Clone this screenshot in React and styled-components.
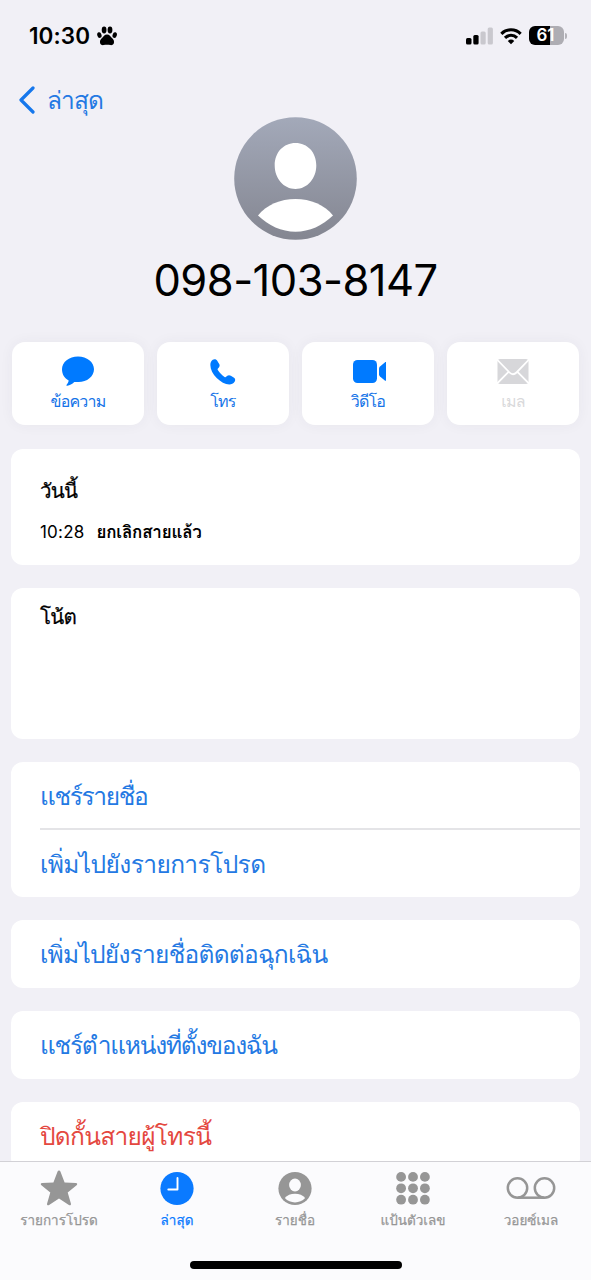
import styled, { createGlobalStyle } from 'styled-components';

const GlobalStyle = createGlobalStyle`
  * {
    box-sizing: border-box;
  }

  body {
    margin: 0;
    background: #f1f0f6;
    color: #000;
    font-family: Inter, Loma, 'Noto Sans', 'Liberation Sans', sans-serif;
  }

  button {
    border: none;
    padding: 0;
    background: none;
    color: inherit;
    font: inherit;
    cursor: pointer;
  }

  svg {
    display: block;
    flex-shrink: 0;
  }
`;

const Screen = styled.div`
  display: flex;
  flex-direction: column;
  width: 591px;
  height: 1280px;
  overflow: hidden;
  background: #f1f0f6;
`;

const StatusBar = styled.div`
  display: flex;
  flex-shrink: 0;
  align-items: center;
  height: 71px;
  padding: 0 24px 0 29px;
`;

const Clock = styled.span`
  margin-right: 7px;
  font-size: 22.5px;
  font-weight: 600;
  letter-spacing: 0.1px;
`;

const StatusIcons = styled.div`
  display: flex;
  align-items: center;
  gap: 7px;
  margin-left: auto;
`;

const Battery = styled.div`
  display: flex;
  align-items: center;
  gap: 1px;

  &::after {
    content: '';
    width: 2px;
    height: 6px;
    border-radius: 0 2px 2px 0;
    background: #b3b2b8;
  }
`;

const BatteryLevel = styled.div`
  width: 35px;
  height: 19px;
  padding-right: 2px;
  border-radius: 6px;
  background: linear-gradient(90deg, #000 ${(p) => p.$level}%, #aeadb3 ${(p) => p.$level}%);
  color: #fff;
  font-size: 17px;
  font-weight: 600;
  line-height: 19px;
  text-align: center;
`;

const BackButton = styled.button`
  display: flex;
  flex-shrink: 0;
  align-items: center;
  align-self: flex-start;
  gap: 12px;
  height: 46px;
  padding: 12px 0 0 18px;
  color: #2479e3;
`;

const Label = styled.span`
  font-size: ${(p) => p.$size || 24.5}px;
  font-weight: ${(p) => (p.$bold ? 700 : 400)};
  letter-spacing: ${(p) => p.$spacing || 0}px;
  line-height: 1.4;
  white-space: nowrap;
  -webkit-text-stroke: ${(p) => (p.$medium ? 0.25 : 0)}px currentColor;
`;

const Content = styled.main`
  display: flex;
  flex: 1;
  flex-direction: column;
  min-height: 0;
  overflow: hidden;
  padding: 0 11px;
`;

const Profile = styled.div`
  display: flex;
  flex-direction: column;
  flex-shrink: 0;
  align-items: center;
  height: 225px;
`;

const PhoneNumber = styled.h1`
  margin: 13px 0 0;
  font-size: 43.5px;
  font-weight: 400;
  letter-spacing: -0.55px;
  line-height: 54px;
  white-space: nowrap;
`;

const Actions = styled.div`
  display: grid;
  flex-shrink: 0;
  grid-template-columns: repeat(4, 1fr);
  gap: 13px;
  margin: 0 1px 24px;
`;

const ActionButton = styled.button`
  display: flex;
  flex-direction: column;
  align-items: center;
  gap: 1px;
  height: 83px;
  padding-top: 13px;
  border-radius: 13px;
  background: #fff;
  box-shadow: 0 0 14px rgba(60, 60, 80, 0.05);
  color: ${(p) => (p.disabled ? '#d9d9db' : '#1674e8')};

  svg {
    height: 34px;
  }
`;

const Card = styled.section`
  flex-shrink: 0;
  height: ${(p) => p.$height}px;
  margin-bottom: 23px;
  border-radius: 12px;
  background: #fff;
`;

const History = styled(Card)`
  padding: 24px 29px 0;
`;

const CallRow = styled.div`
  display: flex;
  align-items: center;
  gap: 12px;
  height: 24px;
  margin-top: 12px;
`;

const DayTitle = styled.div`
  display: flex;
  align-items: center;
  height: 36px;
`;

const Notes = styled(Card)`
  padding: 15px 29px 0;
`;

const Row = styled.button`
  display: flex;
  align-items: center;
  width: calc(100% - 29px);
  height: 66px;
  margin-left: 29px;
  padding-top: 2px;
  color: ${(p) => (p.$danger ? '#e4483f' : '#2479e3')};

  & + & {
    height: 69px;
    border-top: 2px solid #e4e4e7;
  }
`;

const TabBar = styled.nav`
  display: grid;
  flex-shrink: 0;
  grid-template-columns: repeat(5, 118px);
  grid-template-rows: 99px 9px;
  height: 119px;
  border-top: 1px solid #d2d1d6;
  background: #fbfbfd;
`;

const Tab = styled.button`
  display: flex;
  flex-direction: column;
  align-items: center;
  gap: 3px;
  padding-top: 7px;
  color: ${(p) => (p.$active ? '#0a7aff' : '#969696')};

  svg {
    height: 39px;
  }
`;

const HomeIndicator = styled.div`
  grid-column: 1 / -1;
  justify-self: center;
  width: 212px;
  height: 8px;
  margin-left: 1px;
  border-radius: 4px;
  background: #000;
`;

function PawIcon() {
  return (
    <svg width="20" height="20" viewBox="0 0 20 20" fill="#000">
      <ellipse cx="2.4" cy="9.1" rx="2.1" ry="2.9" transform="rotate(-18 2.4 9.1)" />
      <ellipse cx="7.1" cy="4" rx="2.4" ry="3.400" />
      <ellipse cx="13" cy="4" rx="2.4" ry="3.400" />
      <ellipse cx="17.7" cy="9.1" rx="2.1" ry="2.9" transform="rotate(18 17.7 9.1)" />
      <path d="M10 8.4c2.600 0 3.600 2.200 5 3.700 1.400 1.400 2.200 2.500 2 4.300-.2 1.900-1.700 2.900-3.500 2.700-1.400-.2-2.300-.4-3.500-.4s-2.100.2-3.500.4c-1.800.2-3.300-.8-3.500-2.700-.2-1.800.6-2.900 2-4.300 1.400-1.500 2.400-3.700 5-3.700Z" />
    </svg>
  );
}

function SignalIcon() {
  return (
    <svg width="27" height="18" viewBox="0 0 27 18">
      <rect x="0" y="11" width="5.500" height="6.500" rx="1.500" fill="#000" />
      <rect x="7.300" y="8" width="5.300" height="9.500" rx="1.500" fill="#000" />
      <rect x="14.500" y="4.500" width="5.200" height="13" rx="1.500" fill="#c9c8ce" />
      <rect x="21.700" y="0.500" width="5.200" height="17" rx="1.500" fill="#c9c8ce" />
    </svg>
  );
}

function WifiIcon() {
  return (
    <svg width="22" height="18" viewBox="0 0 23 18" fill="none" stroke="#000" strokeWidth="3.200">
      <path d="M1.400 6.700a14.300 14.300 0 0 1 20.200 0" />
      <path d="M5.200 10.900a8.900 8.900 0 0 1 12.600 0" />
      <path d="M11.500 17.600 8.100 14.200a4.800 4.800 0 0 1 6.800 0Z" fill="#000" stroke="none" />
    </svg>
  );
}

function ChevronIcon() {
  return (
    <svg width="17" height="28" viewBox="0 0 17 28" fill="none">
      <path d="M15 2 3 14l12 12" stroke="#1677ec" strokeWidth="3.200" strokeLinecap="round" strokeLinejoin="round" />
    </svg>
  );
}

function Avatar() {
  return (
    <svg width="123" height="123" viewBox="0 0 123 123">
      <defs>
        <linearGradient id="avatar" x1="0" y1="0" x2="0" y2="1">
          <stop offset="0" stopColor="#a3a9b9" />
          <stop offset="1" stopColor="#848691" />
        </linearGradient>
      </defs>
      <circle cx="61.500" cy="61.500" r="61.300" fill="url(#avatar)" />
      <path d="M61.500 26c12 0 20.800 9.300 20.800 22.500 0 12.700-8.800 23.500-20.800 23.500s-20.800-10.800-20.800-23.500C40.700 35.300 49.500 26 61.500 26Z" fill="#fff" />
      <path d="M24 98.500c8-10.500 22.500-16.500 37.500-16.500s29.500 6 37.500 16.500c-10.500 10.200-23.500 16.200-37.500 16.200S34.500 108.700 24 98.500Z" fill="#fff" />
    </svg>
  );
}

function MessageIcon() {
  return (
    <svg width="34" height="34" viewBox="0 0 34 34" fill="#007aff">
      <path d="M17 1.500c9 0 16 5.500 16 12.800 0 7.200-7 12.800-15.500 12.800-1.500 0-2.800 0-4.200-.1-2.200 2-4.600 3.500-7 3.800-1 .1-1.100-.7-.5-1.400 1.100-1.300 1.700-2.300 1.900-3.900C3.500 23.500 1 19.200 1 14.300 1 7 8 1.500 17 1.500Z" />
    </svg>
  );
}

function CallIcon() {
  return (
    <svg width="28" height="34" viewBox="-0.4 -0.500 29.200 35" fill="#007aff">
      <path d="M3.500 4.300c1.600-1.100 3.500-.7 4.500.8l2.100 3.300c1 1.600.7 2.800-.4 4.100l-.8.900c-.5.500-.5 1-.1 1.600 1.800 2.900 4.200 5.300 7 7.100.6.400 1.200.4 1.700-.1l.8-.7c1.300-1.100 2.500-1.300 4.100-.4l3.300 2.100c1.400 1 1.600 2.700.6 4.100-1.300 2-3.200 2.900-5.500 2.900-4.300 0-9.200-2.700-13.200-6.700C3.600 19.300 1 14.300 1 9.700c0-2.300.8-4.200 2.500-5.400Z" />
    </svg>
  );
}

function VideoIcon() {
  return (
    <svg width="36" height="34" viewBox="-3 0 36 34" fill="#007aff">
      <rect x="0" y="5" width="24" height="23" rx="4.500" />
      <path d="M26 13.600c0-.9.300-1.500 1-2.100l4.800-4.100c.9-.6 2.200-.3 2.200.9v16.200c0 1.200-1.300 1.600-2.200.9l-4.800-4c-.7-.6-1-1.200-1-2.100Z" />
    </svg>
  );
}

function MailIcon() {
  return (
    <svg width="32" height="34" viewBox="0 0 32 34">
      <rect x="0.500" y="4" width="31" height="25" rx="2.500" fill="#d7d7da" />
      <path d="m0 4.500 12.500 13c2.300 2.300 4.700 2.300 7 0l12.500-13M0 28.500l11.300-11.300M32 28.500 20.700 17.200" fill="none" stroke="#fff" strokeWidth="1.800" />
    </svg>
  );
}

function StarIcon() {
  return (
    <svg width="38" height="39" viewBox="0 0 38 39" fill="currentColor">
      <path d="M19 1.500c.7 0 1.200.5 1.600 1.500l4 10.600 11.300.4c1.400 0 1.800 1.300.7 2.200l-8.900 7.200 3.200 11c.5 1.600-.8 2.400-2 1.500L19 29.500l-9.900 6.400c-1.200.9-2.500.1-2-1.500l3.200-11-8.900-7.200C.3 15.300.7 14 2.100 14l11.300-.4 4-10.600c.4-1 .9-1.500 1.600-1.500Z" />
    </svg>
  );
}

function RecentsIcon() {
  return (
    <svg width="34" height="39" viewBox="0 0 34 39">
      <circle cx="17" cy="19.500" r="16.600" fill="#0a7aff" />
      <path d="M17.500 9v11.500H8.300" fill="none" stroke="#fff" strokeWidth="1.900" strokeLinecap="round" strokeLinejoin="round" />
    </svg>
  );
}

function ContactsIcon() {
  return (
    <svg width="34" height="39" viewBox="0 0 34 39">
      <circle cx="17" cy="19.500" r="16.600" fill="#969696" />
      <ellipse cx="17" cy="16" rx="5.900" ry="6.500" fill="#fbfbfd" />
      <path d="M6.800 29c2.200-2.900 6-4.300 10.200-4.300s8 1.400 10.200 4.300c-2.800 2.900-6.300 4.400-10.200 4.400s-7.400-1.500-10.200-4.400Z" fill="#fbfbfd" />
    </svg>
  );
}

function KeypadIcon() {
  const columns = [5.1, 17, 28.9];
  const rows = [7.9, 19.3, 30.7];
  return (
    <svg width="34" height="39" viewBox="0 0 34 39" fill="currentColor">
      {rows.map((y) => columns.map((x) => <circle key={`${x}-${y}`} cx={x} cy={y} r="4.900" />))}
    </svg>
  );
}

function VoicemailIcon() {
  return (
    <svg width="50" height="39" viewBox="0 0 50 39" fill="none" stroke="currentColor" strokeWidth="2.500">
      <circle cx="11.500" cy="19" r="9.700" />
      <circle cx="38.500" cy="19" r="9.700" />
      <path d="M11.500 28.700h27" />
    </svg>
  );
}

const actions = [
  { label: 'ข้อความ', Icon: MessageIcon },
  { label: 'โทร', Icon: CallIcon },
  { label: 'วิดีโอ', Icon: VideoIcon },
  { label: 'เมล', Icon: MailIcon, disabled: true },
];

const tabs = [
  { label: 'รายการโปรด', Icon: StarIcon },
  { label: 'ล่าสุด', Icon: RecentsIcon, active: true },
  { label: 'รายชื่อ', Icon: ContactsIcon },
  { label: 'แป้นตัวเลข', Icon: KeypadIcon },
  { label: 'วอยซ์เมล', Icon: VoicemailIcon },
];

function App() {
  return (
    <Screen>
      <GlobalStyle />
      <StatusBar>
        <Clock>10:30</Clock>
        <PawIcon />
        <StatusIcons>
          <SignalIcon />
          <WifiIcon />
          <Battery>
            <BatteryLevel $level={61}>61</BatteryLevel>
          </Battery>
        </StatusIcons>
      </StatusBar>

      <BackButton type="button">
        <ChevronIcon />
        <Label $spacing={-0.9}>ล่าสุด</Label>
      </BackButton>

      <Content>
        <Profile>
          <Avatar />
          <PhoneNumber>098-103-8147</PhoneNumber>
        </Profile>

        <Actions>
          {actions.map(({ label, Icon, disabled }) => (
            <ActionButton key={label} type="button" disabled={disabled}>
              <Icon />
              <Label $size={16} $spacing={-0.8}>{label}</Label>
            </ActionButton>
          ))}
        </Actions>

        <History $height={116}>
          <DayTitle>
            <Label $size={20.5} $spacing={-0.8} $medium>วันนี้</Label>
          </DayTitle>
          <CallRow>
            <Label $size={17} $spacing={0.2}>10:28</Label>
            <Label $size={17} $spacing={-0.2} $bold>ยกเลิกสายแล้ว</Label>
          </CallRow>
        </History>

        <Notes $height={151}>
          <Label $size={20.5} $spacing={-0.8} $medium>โน้ต</Label>
        </Notes>

        <Card $height={135}>
          <Row type="button"><Label $spacing={-1.35}>แชร์รายชื่อ</Label></Row>
          <Row type="button"><Label $spacing={-0.6}>เพิ่มไปยังรายการโปรด</Label></Row>
        </Card>
        <Card $height={68}>
          <Row type="button"><Label $spacing={-0.75}>เพิ่มไปยังรายชื่อติดต่อฉุกเฉิน</Label></Row>
        </Card>
        <Card $height={68}>
          <Row type="button"><Label $spacing={-1.25}>แชร์ตำแหน่งที่ตั้งของฉัน</Label></Row>
        </Card>
        <Card $height={68}>
          <Row type="button" $danger><Label $spacing={-0.7}>ปิดกั้นสายผู้โทรนี้</Label></Row>
        </Card>
      </Content>

      <TabBar>
        {tabs.map(({ label, Icon, active }) => (
          <Tab key={label} type="button" $active={active}>
            <Icon />
            <Label $size={13.5} $medium>{label}</Label>
          </Tab>
        ))}
        <HomeIndicator />
      </TabBar>
    </Screen>
  );
}

export default App;
